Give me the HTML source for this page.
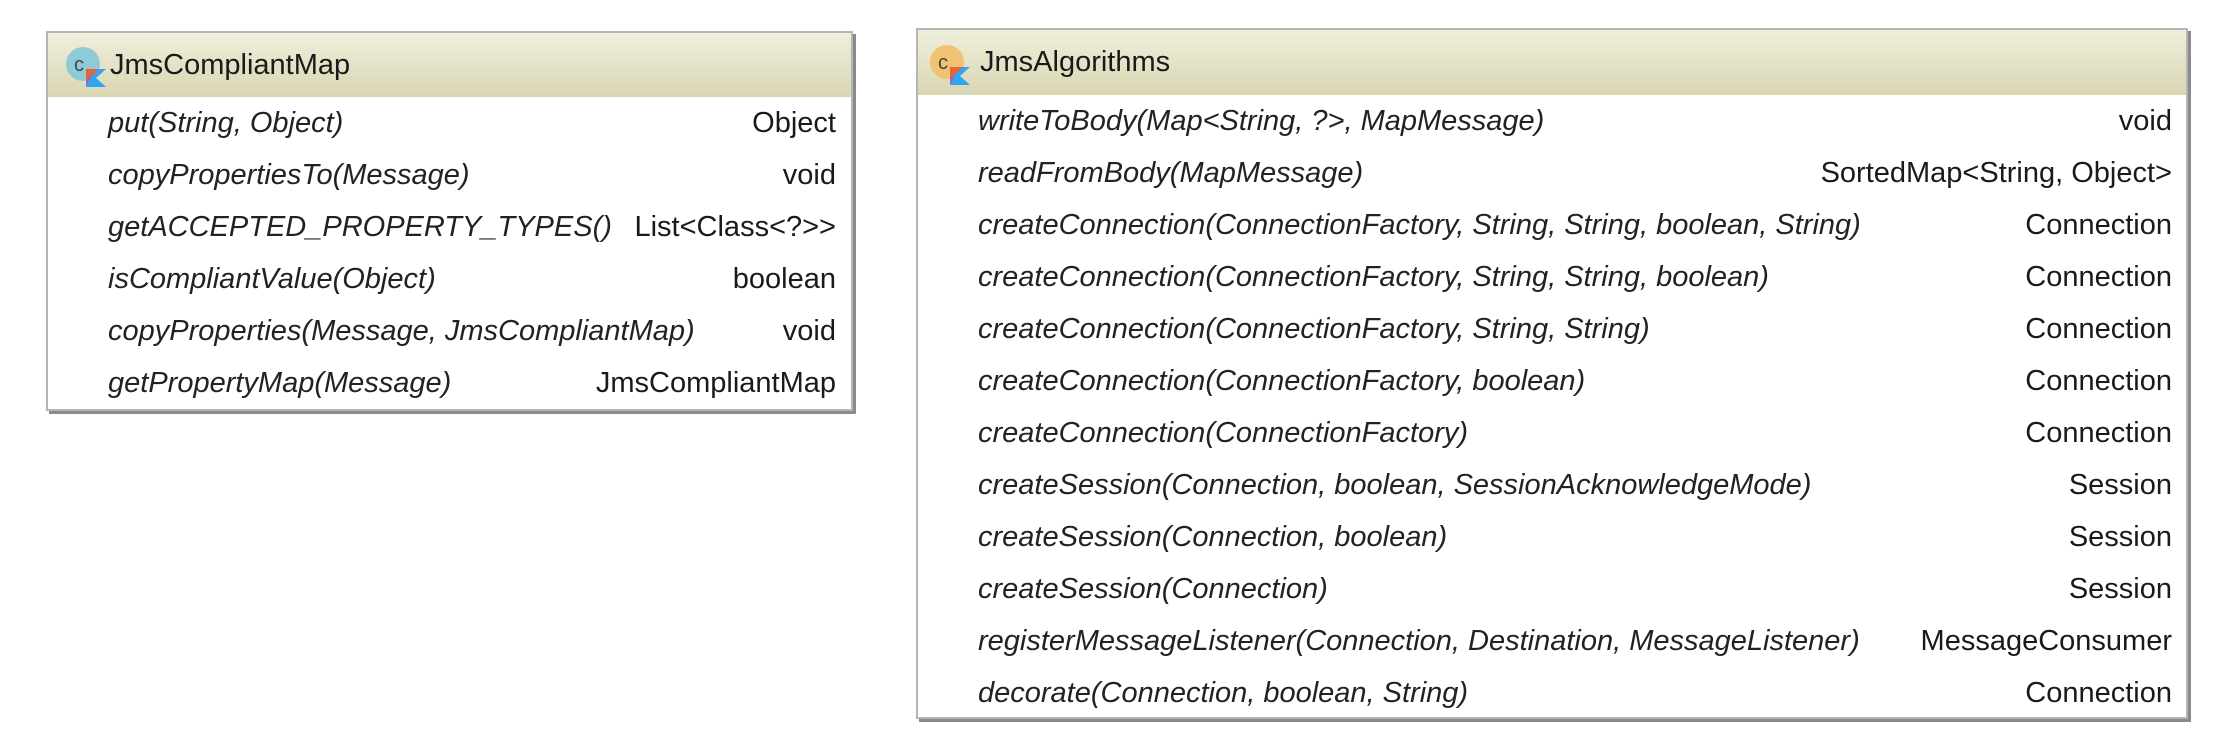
<!DOCTYPE html>
<html><head><meta charset="utf-8"><style>
*{margin:0;padding:0;box-sizing:border-box}
body{width:2228px;height:742px;background:#fff;position:relative;overflow:hidden;font-family:"Liberation Sans",sans-serif;color:#1a1a1a}
.box{position:absolute;background:#fff;border:2px solid #b5b5b5;box-shadow:3px 3px 0 #8a8a8a}
.hd{height:64px;background:linear-gradient(#f0efdc,#d8d6b2);display:flex;align-items:center;font-size:29px;position:relative}
.ic{position:absolute}
.row{height:52px;display:flex;align-items:center;justify-content:space-between;font-size:29px;white-space:nowrap}
.row i{font-style:italic;color:#222}
.row span{color:#1a1a1a}
</style></head><body>
<div class="box" style="left:46px;top:31px;width:807px;height:380px">
 <div class="hd"><svg class="ic" style="left:16px;top:12px;width:44px;height:44px" viewBox="0 0 44 44"><circle cx="19" cy="19" r="17" fill="#8ecbd9"/><text x="10" y="26" font-size="20" font-family="Liberation Sans" fill="#444">c</text><polygon points="22,24 42,24 32,33 42,42 22,42" fill="#2fa6f0"/><polygon points="22,24 35,24 22,36" fill="#e9633a"/><polygon points="22,36 28,30 22,42" fill="#9b5ed6"/></svg><span style="margin-left:62px">JmsCompliantMap</span></div>
 <div style="padding:0 15px 0 60px">
  <div class="row"><i>put(String, Object)</i><span>Object</span></div>
  <div class="row"><i>copyPropertiesTo(Message)</i><span>void</span></div>
  <div class="row"><i>getACCEPTED_PROPERTY_TYPES()</i><span>List&lt;Class&lt;?&gt;&gt;</span></div>
  <div class="row"><i>isCompliantValue(Object)</i><span>boolean</span></div>
  <div class="row"><i>copyProperties(Message, JmsCompliantMap)</i><span>void</span></div>
  <div class="row"><i>getPropertyMap(Message)</i><span>JmsCompliantMap</span></div>
 </div>
</div>
<div class="box" style="left:916px;top:28px;width:1272px;height:691px">
 <div class="hd" style="height:65px"><svg class="ic" style="left:10px;top:13px;width:44px;height:44px" viewBox="0 0 44 44"><circle cx="19" cy="19" r="17" fill="#f0c272"/><text x="10" y="26" font-size="20" font-family="Liberation Sans" fill="#444">c</text><polygon points="22,24 42,24 32,33 42,42 22,42" fill="#2fa6f0"/><polygon points="22,24 35,24 22,36" fill="#e9633a"/><polygon points="22,36 28,30 22,42" fill="#9b5ed6"/></svg><span style="margin-left:62px">JmsAlgorithms</span></div>
 <div style="padding:0 14px 0 60px">
  <div class="row"><i>writeToBody(Map&lt;String, ?&gt;, MapMessage)</i><span>void</span></div>
  <div class="row"><i>readFromBody(MapMessage)</i><span>SortedMap&lt;String, Object&gt;</span></div>
  <div class="row"><i>createConnection(ConnectionFactory, String, String, boolean, String)</i><span>Connection</span></div>
  <div class="row"><i>createConnection(ConnectionFactory, String, String, boolean)</i><span>Connection</span></div>
  <div class="row"><i>createConnection(ConnectionFactory, String, String)</i><span>Connection</span></div>
  <div class="row"><i>createConnection(ConnectionFactory, boolean)</i><span>Connection</span></div>
  <div class="row"><i>createConnection(ConnectionFactory)</i><span>Connection</span></div>
  <div class="row"><i>createSession(Connection, boolean, SessionAcknowledgeMode)</i><span>Session</span></div>
  <div class="row"><i>createSession(Connection, boolean)</i><span>Session</span></div>
  <div class="row"><i>createSession(Connection)</i><span>Session</span></div>
  <div class="row"><i>registerMessageListener(Connection, Destination, MessageListener)</i><span>MessageConsumer</span></div>
  <div class="row"><i>decorate(Connection, boolean, String)</i><span>Connection</span></div>
 </div>
</div>
</body></html>
